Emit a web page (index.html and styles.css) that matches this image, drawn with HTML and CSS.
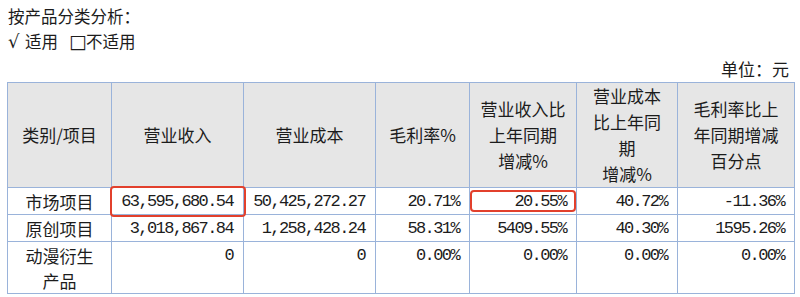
FILE: index.html
```html
<!DOCTYPE html>
<html>
    <head>
        <meta charset="utf-8">
        <title>按产品分类分析</title>
        <link rel="stylesheet" href="styles.css">
    </head>
    <body>
        <div class="wrap">
            <p class="title">按产品分类分析：</p>
            <p class="choice"><span class="tick">√</span>适用<span class="box">□</span>不适用</p>
            <p class="unit">单位：元</p>
            <table class="report">
                <colgroup>
                    <col class="c1">
                    <col class="c2">
                    <col class="c3">
                    <col class="c4">
                    <col class="c5">
                    <col class="c6">
                    <col class="c7">
                </colgroup>
                <thead>
                    <tr>
                        <th>类别/项目</th>
                        <th>营业收入</th>
                        <th>营业成本</th>
                        <th>毛利率%</th>
                        <th>营业收入比<br>上年同期<br>增减%</th>
                        <th>营业成本<br>比上年同<br>期<br>增减%</th>
                        <th>毛利率比上<br>年同期增减<br>百分点</th>
                    </tr>
                </thead>
                <tbody>
                    <tr>
                        <td class="name">市场项目</td>
                        <td class="num mark"><span class="ring ring-a"></span>63,595,680.54</td>
                        <td class="num">50,425,272.27</td>
                        <td class="num">20.71%</td>
                        <td class="num mark"><span class="ring ring-b"></span>20.55%</td>
                        <td class="num">40.72%</td>
                        <td class="num">-11.36%</td>
                    </tr>
                    <tr>
                        <td class="name">原创项目</td>
                        <td class="num">3,018,867.84</td>
                        <td class="num">1,258,428.24</td>
                        <td class="num">58.31%</td>
                        <td class="num">5409.55%</td>
                        <td class="num">40.30%</td>
                        <td class="num">1595.26%</td>
                    </tr>
                    <tr>
                        <td class="name">动漫衍生产品</td>
                        <td class="num">0</td>
                        <td class="num">0</td>
                        <td class="num">0.00%</td>
                        <td class="num">0.00%</td>
                        <td class="num">0.00%</td>
                        <td class="num">0.00%</td>
                    </tr>
                </tbody>
            </table>
        </div>
    </body>
</html>
```
FILE: styles.css
```css
*{margin:0;padding:0}
body{
    background:#fff;
    color:#1c1c1c;
    font-family:"Noto Sans CJK SC","DejaVu Sans",sans-serif;
    font-size:16px;
}
.wrap{
    padding:4px 7px 0 7px;
}
p{
    line-height:25px;
}
.title,.choice{
    padding-left:1px;
    font-size:16.5px;
}
.tick,.box{
    display:inline-block;
    font-family:"DejaVu Sans",sans-serif;
    line-height:20px;
}
.tick{
    width:17px;
    font-size:18px;
}
.box{
    margin-left:11px;
    width:17px;
    font-size:19px;
}
.unit{
    margin-top:2px;
    margin-bottom:1px;
    text-align:right;
    padding-right:4px;
    font-size:17px;
}
.report{
    width:787px;
    border-collapse:collapse;
    table-layout:fixed;
}
.c1{width:104px}
.c2{width:132px}
.c3{width:132px}
.c4{width:94px}
.c5{width:107px}
.c6{width:101px}
.c7{width:117px}
.report th,.report td{
    border:1px solid #9ab3da;
}
.report th{
    height:101px;
    background:#e6e6e6;
    font-weight:normal;
    font-size:17px;
    line-height:26px;
    text-align:center;
    vertical-align:middle;
}
.report td{
    padding:1px 9px 0 4px;
    line-height:25px;
    vertical-align:top;
}
.report td.name{
    padding:1px 12px 0;
    text-align:center;
    font-size:17px;
}
.report td.num{
    text-align:right;
    font-family:"Liberation Mono","DejaVu Sans Mono",monospace;
    font-size:17px;
    letter-spacing:-1.6px;
    padding-right:10px;
}
.mark{
    position:relative;
}
.ring{
    position:absolute;
    border:2px solid #e2402c;
    border-radius:4px;
}
.ring-a{
    left:-2px;
    right:-3px;
    top:-2px;
    bottom:-3px;
}
.ring-b{
    left:0;
    right:0;
    top:2px;
    bottom:2px;
}
```
